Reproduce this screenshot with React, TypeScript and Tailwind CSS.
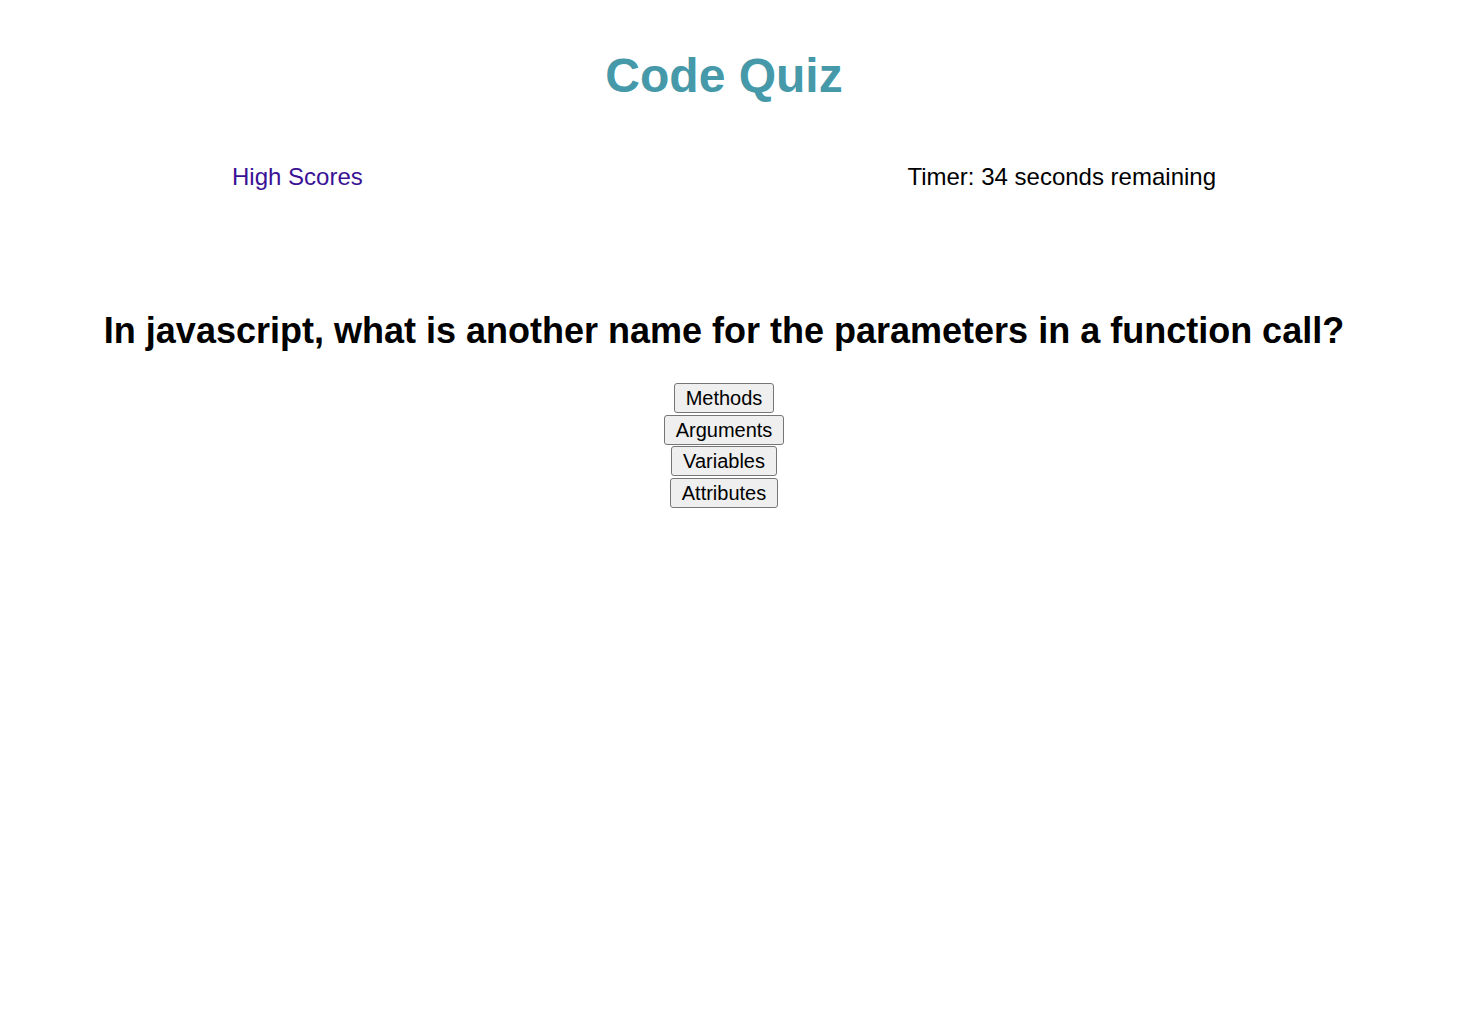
export default function App() {
  const answers = ["Methods", "Arguments", "Variables", "Attributes"];
  return (
    <div className="min-h-[1014px] w-[1448px] bg-white" style={{ fontFamily: '"Liberation Sans", Arial, sans-serif' }}>
      <h1 className="pt-[48px] text-center text-[48px] font-bold leading-[55px] text-[#4599a9]">Code Quiz</h1>
      <div className="mt-[60px] flex justify-between px-[232px] text-[24px] leading-[28px]">
        <a href="#" className="text-[#3a1296]">High Scores</a>
        <span className="text-black">Timer: 34 seconds remaining</span>
      </div>
      <h2 className="mt-[119px] text-center text-[36px] font-bold leading-[41px] text-black">
        In javascript, what is another name for the parameters in a function call?
      </h2>
      <div className="mt-[32px] flex flex-col items-center gap-[1.5px]">
        {answers.map((a) => (
          <button
            key={a}
            className="h-[30px] rounded-[3px] border border-[#767676] bg-[#efefef] px-[11px] text-[20px] leading-[24px] text-black"
          >
            {a}
          </button>
        ))}
      </div>
    </div>
  );
}
